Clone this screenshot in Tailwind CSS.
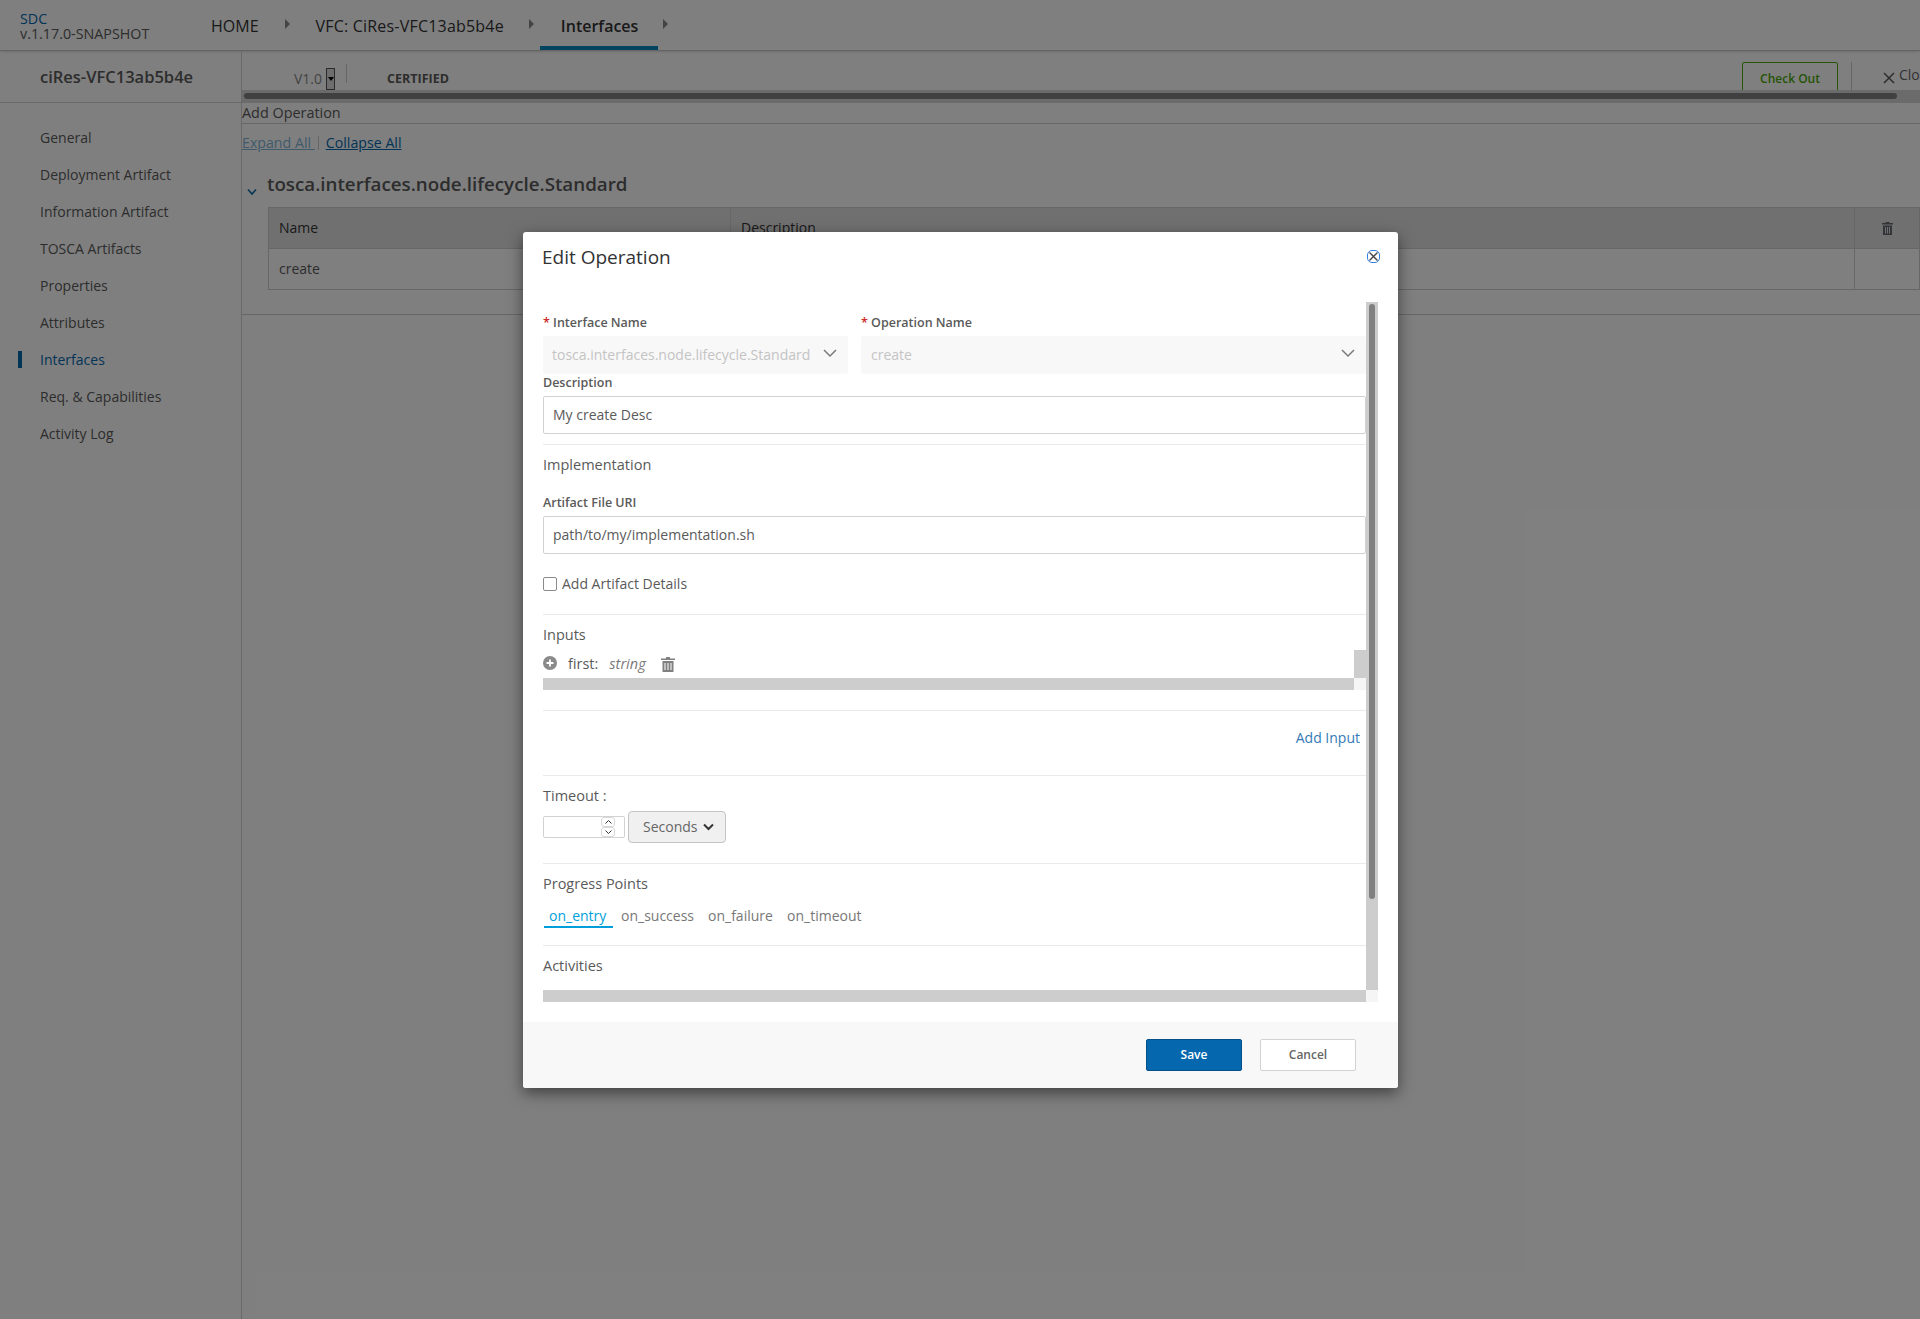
<!DOCTYPE html>
<html lang="en">
<head>
  <meta charset="UTF-8">
  <title>SDC - Edit Operation</title>
  <script src="https://cdn.jsdelivr.net/npm/@tailwindcss/browser@4"></script>
</head>
<body class="font-['Open_Sans',sans-serif] bg-white text-[#5a5a5a]">
<div class="relative w-[1920px] h-[1319px] overflow-hidden">

  <!-- top bar -->
  <header class="h-[51px] flex border-b border-[#c8c8c8] shadow-sm">
    <div class="w-[211px] pl-[20px] pt-[11px] text-[14.3px] leading-[15px]">
      <div class="text-[#0568ae]">SDC</div>
      <div>v.1.17.0-SNAPSHOT</div>
    </div>
    <nav class="flex text-[16px] text-[#333]">
      <a class="pt-[14px]">HOME</a>
      <span class="ml-[26px] mt-[19px] w-0 h-0 border-y-[5px] border-y-transparent border-l-[5px] border-l-[#888]"></span>
      <a class="ml-[26px] pt-[14px] tracking-[0.2px]">VFC: CiRes-VFC13ab5b4e</a>
      <span class="ml-[25px] mt-[19px] w-0 h-0 border-y-[5px] border-y-transparent border-l-[5px] border-l-[#888]"></span>
      <a class="ml-[6px] pl-[21px] pr-[20px] pt-[14px] h-[50px] border-b-[4px] border-[#0088c0] font-semibold">Interfaces</a>
      <span class="ml-[5px] mt-[19px] w-0 h-0 border-y-[5px] border-y-transparent border-l-[5px] border-l-[#888]"></span>
    </nav>
  </header>

  <div class="flex h-[1268px]">
    <!-- left menu -->
    <aside class="w-[242px] shrink-0 border-r border-[#d2d2d2]">
      <div class="h-[52px] border-b border-[#d2d2d2] pl-[40px] pt-[14px] text-[16.5px] font-semibold">ciRes-VFC13ab5b4e</div>
      <ul class="pt-[16px] text-[14px]">
        <li class="h-[37px] pl-[40px] leading-[37px]">General</li>
        <li class="h-[37px] pl-[40px] leading-[37px]">Deployment Artifact</li>
        <li class="h-[37px] pl-[40px] leading-[37px]">Information Artifact</li>
        <li class="h-[37px] pl-[40px] leading-[37px]">TOSCA Artifacts</li>
        <li class="h-[37px] pl-[40px] leading-[37px]">Properties</li>
        <li class="h-[37px] pl-[40px] leading-[37px]">Attributes</li>
        <li class="relative h-[37px] pl-[40px] leading-[37px] text-[#0568ae]">
          <span class="absolute left-[18px] top-[10px] w-[4px] h-[17px] bg-[#0568ae]"></span>Interfaces
        </li>
        <li class="h-[37px] pl-[40px] leading-[37px]">Req. &amp; Capabilities</li>
        <li class="h-[37px] pl-[40px] leading-[37px]">Activity Log</li>
      </ul>
    </aside>

    <main class="flex-1 min-w-0">
      <!-- version row -->
      <div class="relative h-[39px] flex overflow-hidden">
        <span class="ml-[52px] mt-[17px] text-[14px] text-[#888]">V1.0</span>
        <span class="ml-[4px] mt-[17px] w-[9px] h-[22px] border border-[#555] bg-[#ddd] flex justify-center pt-[8px]">
          <span class="w-0 h-0 border-x-[3px] border-x-transparent border-t-[4px] border-t-black"></span>
        </span>
        <span class="ml-[11px] mt-[13px] w-px h-[19px] bg-[#ccc]"></span>
        <span class="ml-[40px] mt-[19px] text-[12.5px] font-bold">CERTIFIED</span>
        <span class="absolute left-[1500px] top-[11px] w-[96px] h-[32px] border border-[#4ca90c] rounded-t-[2px] text-[#4ca90c] text-[12px] font-semibold flex justify-center pt-[7px]">Check Out</span>
        <span class="absolute left-[1609px] top-[11px] w-px h-[30px] bg-[#ccc]"></span>
        <span class="absolute left-[1641px] top-[13px] flex items-start gap-[4px] text-[#666] text-[14px] whitespace-nowrap">
          <svg class="w-[12px] h-[12px] mt-[8px]" viewBox="0 0 12 12"><path d="M1 1l10 10M11 1L1 11" stroke="#5a5a5a" stroke-width="1.5"/></svg>Close
        </span>
      </div>
      <div class="relative h-[13px] bg-[#d6d6d6]">
        <div class="absolute left-[2px] top-[3px] w-[1653px] h-[6px] rounded-[3px] bg-[#808080]"></div>
      </div>
      <div class="h-[21px] border-b border-[#cfcfcf] text-[14.4px] leading-[20px]">Add Operation</div>
      <div class="flex items-center h-[38px] text-[14.2px]">
        <a class="text-[#7fb4d7] underline">Expand All&nbsp;</a>
        <span class="ml-[3px] w-px h-[14px] bg-[#ccc]"></span>
        <a class="ml-[7px] text-[#0568ae] underline">Collapse All</a>
      </div>
      <div class="flex h-[45px] pt-[10px]">
        <svg class="ml-[5px] mt-[16px] w-[10px] h-[8px]" viewBox="0 0 10 8"><path d="M1 1.5l4 4.5 4-4.5" fill="none" stroke="#0f6fa8" stroke-width="1.6"/></svg>
        <h2 class="ml-[10px] text-[18.75px] font-semibold leading-[24px]">tosca.interfaces.node.lifecycle.Standard</h2>
      </div>
      <div class="ml-[26px] border border-[#cfcfcf] text-[14px]">
        <div class="flex h-[41px] bg-[#e0e0e0] border-b border-[#cfcfcf] leading-[40px] text-[#333]">
          <div class="w-[462px] pl-[10px] border-r border-[#cfcfcf]">Name</div>
          <div class="w-[1124px] pl-[10px] border-r border-[#cfcfcf]">Description</div>
          <div class="flex-1 flex justify-center items-center">
            <svg class="w-[11px] h-[13px]" viewBox="0 0 11 13"><path fill-rule="evenodd" d="M3.500 0h4v1h3.500v1.500h-11v-1.500h3.500zM1 3.500h9v9.500h-9zM3 5v6.500h1v-6.500zM5 5v6.500h1v-6.500zM7 5v6.500h1v-6.500z" fill="#666a70"/></svg>
          </div>
        </div>
        <div class="flex h-[40px] leading-[40px]">
          <div class="w-[462px] pl-[10px]">create</div>
          <div class="w-[1124px] border-r border-[#cfcfcf]"></div>
        </div>
      </div>
      <div class="mt-[24px] border-b border-[#cfcfcf]"></div>
    </main>
  </div>

  <!-- backdrop -->
  <div class="absolute inset-0 bg-black/50"></div>

  <!-- modal -->
  <div class="absolute left-[523px] top-[232px] w-[875px] h-[856px] bg-white rounded-[3px] shadow-[0_5px_15px_rgba(0,0,0,0.5)] flex flex-col">
    <div class="relative h-[70px] shrink-0 pl-[19px] pt-[13px] text-[19px] leading-[25px] font-medium text-[#333]">
      Edit Operation
      <span class="absolute left-[844px] top-[18px] w-[13px] h-[13px] rounded-[5px] border border-[#2f7fe0] flex items-center justify-center">
        <svg class="w-[9px] h-[9px]" viewBox="0 0 9 9"><path d="M.5.500l8 8M8.500.500l-8 8" stroke="#444" stroke-width="1.400"/></svg>
      </span>
    </div>

    <!-- scrolling form -->
    <div class="relative h-[700px] shrink-0 ml-[20px] mr-[20px] text-[14px]">
      <div class="w-[823px]">
        <div class="flex gap-[13px] pt-[13px]">
          <div class="w-[305px]">
            <label class="block h-[21px] text-[12.5px] leading-[15px] font-semibold"><span class="text-[#cf2a2a]">*</span> Interface Name</label>
            <div class="h-[38px] bg-[#f8f8f8] rounded-[2px] pl-[10px] pr-[11px] pb-[2px] flex items-center justify-between text-[#c4c4c4]">
              <span class="whitespace-nowrap -ml-px">tosca.interfaces.node.lifecycle.Standard</span>
              <svg class="w-[14px] h-[9px] shrink-0 -mt-[2px]" viewBox="0 0 14 9"><path d="M1 1l6 6 6-6" fill="none" stroke="#7a7a7a" stroke-width="1.500"/></svg>
            </div>
          </div>
          <div class="w-[505px]">
            <label class="block h-[21px] text-[12.5px] leading-[15px] font-semibold"><span class="text-[#cf2a2a]">*</span> Operation Name</label>
            <div class="h-[38px] bg-[#f8f8f8] rounded-[2px] pl-[10px] pr-[11px] pb-[2px] flex items-center justify-between text-[#c4c4c4]">
              <span>create</span>
              <svg class="w-[14px] h-[9px] shrink-0 -mt-[2px]" viewBox="0 0 14 9"><path d="M1 1l6 6 6-6" fill="none" stroke="#7a7a7a" stroke-width="1.500"/></svg>
            </div>
          </div>
        </div>
        <label class="block mt-[1px] h-[21px] text-[12.5px] leading-[15px] font-semibold">Description</label>
        <div class="h-[38px] border border-[#d2d2d2] rounded-[2px] pl-[9px] leading-[36px]">My create Desc</div>

        <div class="mt-[10px] border-t border-[#eaeaea] h-[51px] pt-[10px] text-[14.5px] leading-[20px]">Implementation</div>
        <label class="block h-[21px] text-[12.5px] leading-[15px] font-semibold">Artifact File URI</label>
        <div class="h-[38px] border border-[#d2d2d2] rounded-[2px] pl-[9px] leading-[36px]">path/to/my/implementation.sh</div>
        <div class="h-[61px] flex items-center gap-[5px] border-b border-[#eaeaea] pb-[1px]">
          <span class="w-[14px] h-[14px] border border-[#8a8a8a] rounded-[2px]"></span>
          <span>Add Artifact Details</span>
        </div>

        <div class="relative h-[96px] border-b border-[#eaeaea]">
          <div class="pt-[10px] text-[14.5px] leading-[20px]">Inputs</div>
          <div class="flex items-center h-[20px] mt-[9px] text-[14.5px]">
            <svg class="w-[14px] h-[14px] -mt-[3px]" viewBox="0 0 14 14"><circle cx="7" cy="7" r="7" fill="#8a8a8a"/><path d="M7 3.500v7M3.500 7h7" stroke="#fff" stroke-width="1.800"/></svg>
            <span class="ml-[11px]">first:</span>
            <span class="ml-[11px] italic text-[#7a7a7a]">string</span>
            <svg class="ml-[15px] w-[14px] h-[15px]" viewBox="0 0 14 15"><path fill-rule="evenodd" d="M5 0h4v1.500h5v1.500h-14v-1.500h5zM1.500 4h11v11h-11zM3.500 6v7h1v-7zM6.500 6v7h1v-7zM9.500 6v7h1v-7z" fill="#808080"/></svg>
          </div>
          <div class="absolute left-[811px] top-[35px] w-[12px] h-[28px] bg-[#cdcdcd]"></div>
          <div class="absolute left-0 top-[63px] w-[811px] h-[12px] bg-[#cdcdcd]"></div>
          <div class="absolute left-[811px] top-[63px] w-[12px] h-[12px] bg-[#f5f5f5]"></div>
        </div>

        <div class="h-[65px] border-b border-[#eaeaea] flex justify-end items-center pr-[6px] pb-[12px] text-[#337ab7]">Add Input</div>

        <div class="h-[88px] border-b border-[#eaeaea]">
          <div class="pt-[10px] text-[14.5px] leading-[20px]">Timeout :</div>
          <div class="flex items-start mt-[5px]">
            <div class="relative w-[82px] h-[22px] mt-[5px] border border-[#d2d2d2] rounded-[2px]">
              <span class="absolute left-[57px] top-0 w-[14px] h-[10px] flex items-center justify-center border border-[#d8d8d8] rounded-[3px]">
                <svg class="w-[7px] h-[4px]" viewBox="0 0 7 4"><path d="M.5 3.500l3-3 3 3" fill="none" stroke="#333" stroke-width="1"/></svg>
              </span>
              <span class="absolute left-[57px] top-[10px] w-[14px] h-[10px] flex items-center justify-center border border-[#d8d8d8] rounded-[3px]">
                <svg class="w-[7px] h-[4px]" viewBox="0 0 7 4"><path d="M.5.500l3 3 3-3" fill="none" stroke="#333" stroke-width="1"/></svg>
              </span>
            </div>
            <div class="ml-[3px] w-[98px] h-[32px] border border-[#c4c4c4] rounded-[4px] bg-[#f0f0f0] pl-[14px] pb-[1px] flex items-center gap-[5px] text-[#666]">
              Seconds
              <svg class="w-[11px] h-[8px]" viewBox="0 0 11 8"><path d="M1 1.500l4.500 4.500 4.500-4.500" fill="none" stroke="#333" stroke-width="2"/></svg>
            </div>
          </div>
        </div>

        <div class="h-[82px] border-b border-[#eaeaea]">
          <div class="pt-[10px] text-[14.5px] leading-[20px]">Progress Points</div>
          <div class="flex mt-[12px] text-[#777]">
            <a class="ml-[1px] w-[69px] pl-[5px] h-[22px] border-b-2 border-[#009fdb] text-[#009fdb] leading-[20px]">on_entry</a>
            <a class="ml-[8px] w-[87px] leading-[20px]">on_success</a>
            <a class="w-[79px] leading-[20px]">on_failure</a>
            <a class="leading-[20px]">on_timeout</a>
          </div>
        </div>

        <div class="pt-[10px] text-[14.5px] leading-[20px]">Activities</div>
      </div>

      <!-- scrollbars -->
      <div class="absolute left-0 top-[688px] w-[823px] h-[12px] bg-[#cdcdcd]"></div>
      <div class="absolute left-[823px] top-0 w-[12px] h-[688px] bg-[#cdcdcd]">
        <div class="ml-[3px] mt-[2px] w-[6px] h-[595px] rounded-[3px] bg-[#808080]"></div>
      </div>
      <div class="absolute left-[823px] top-[688px] w-[12px] h-[12px] bg-[#f5f5f5]"></div>
    </div>

    <div class="mt-auto h-[66px] bg-[#f8f8f8] rounded-b-[3px] flex justify-end items-start pt-[17px] pr-[42px] gap-[18px] text-[12px] font-semibold">
      <button class="w-[96px] h-[32px] bg-[#0568ae] border border-[#04508a] rounded-[2px] text-white">Save</button>
      <button class="w-[96px] h-[32px] bg-white border border-[#d2d2d2] rounded-[2px] text-[#666]">Cancel</button>
    </div>
  </div>
</div>
</body>
</html>
